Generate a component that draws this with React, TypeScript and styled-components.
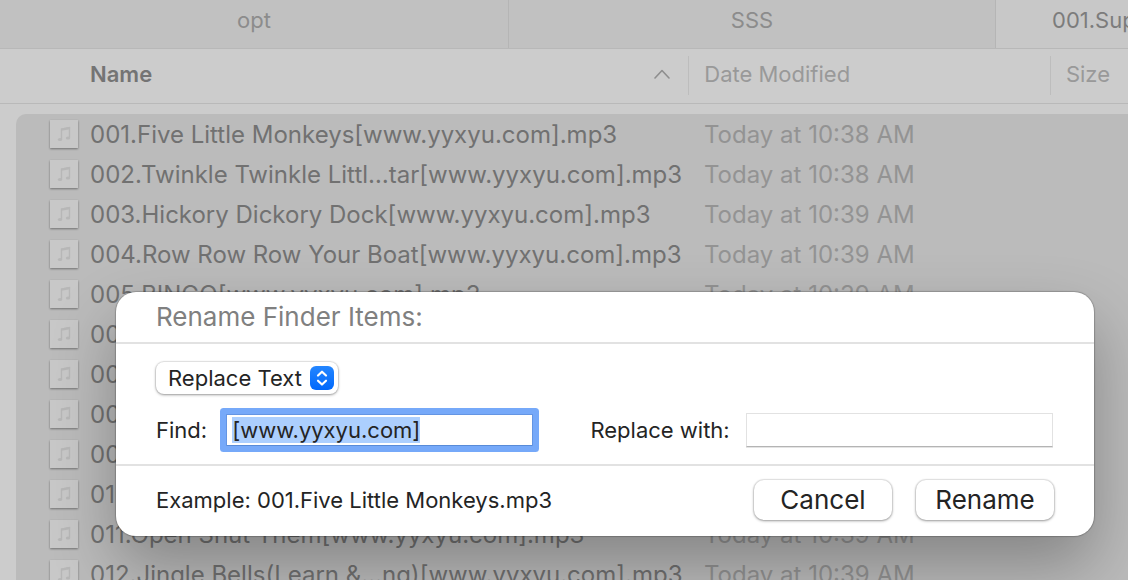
import React, { useEffect, useRef } from 'react';
import styled, { createGlobalStyle } from 'styled-components';

const GlobalStyle = createGlobalStyle`
  * { box-sizing: border-box; }
  body {
    margin: 0;
    overflow: hidden;
    background: #cccccc;
    font-family: Inter, "Liberation Sans", sans-serif;
    font-size: 22px;
  }
`;

const Finder = styled.main`
  position: relative;
  height: 100vh;
  overflow: hidden;
`;

const TabBar = styled.nav`
  display: grid;
  grid-template-columns: 509fr 487fr 132fr;
  height: 49px;
  background: #c1c1c1;
  border-bottom: 1px solid #b8b8b8;
`;

const Tab = styled.button<{ $active?: boolean }>`
  min-width: 0;
  padding: 0 0 8px ${(p) => (p.$active ? 56 : 0)}px;
  border: 0;
  border-right: ${(p) => (p.$active ? 0 : 1)}px solid #b5b5b5;
  background: ${(p) => (p.$active ? '#c8c8c8' : 'transparent')};
  color: ${(p) => (p.$active ? '#7c7c7c' : '#8c8c8c')};
  font: inherit;
  text-align: ${(p) => (p.$active ? 'left' : 'center')};
  white-space: nowrap;
  overflow: hidden;
`;

const FileTable = styled.table`
  display: block;
  white-space: nowrap;
`;

const TableHead = styled.thead`
  display: block;
  border-bottom: 1px solid #b9b9b9;
`;

const HeadRow = styled.tr`
  display: grid;
  grid-template-columns: 689fr 362fr 77fr;
  padding: 7px 0 8px;
`;

const HeadCell = styled.th<{ $primary?: boolean }>`
  display: flex;
  align-items: center;
  justify-content: space-between;
  height: 39px;
  padding: 0 18px 4px ${(p) => (p.$primary ? 90 : 15)}px;
  border-left: ${(p) => (p.$primary ? 0 : 1)}px solid #bdbdbd;
  color: ${(p) => (p.$primary ? '#747474' : '#999999')};
  font-weight: ${(p) => (p.$primary ? 600 : 400)};
`;

const TableBody = styled.tbody`
  display: block;
  margin: 10px 0 0 16px;
  border-radius: 10px 0 0 0;
  background: #bbbbbb;
`;

const FileRow = styled.tr`
  display: grid;
  grid-template-columns: 673fr 362fr 77fr;
  height: 40px;
`;

const Cell = styled.td`
  display: flex;
  align-items: center;
  font-size: 24px;
`;

const NameCell = styled(Cell)`
  gap: 12px;
  padding: 0 0 0 34px;
  color: #717171;
`;

const DateCell = styled(Cell)`
  padding: 0 0 0 15px;
  color: #939393;
`;

const Thumb = styled.span`
  display: flex;
  align-items: center;
  justify-content: center;
  width: 28px;
  height: 28px;
  background: #c8c8c8;
  box-shadow: 0 1px 2px rgba(0, 0, 0, 0.4);
`;

const Dialog = styled.form`
  position: absolute;
  top: 292px;
  left: 116px;
  right: 34px;
  border-radius: 20px;
  background: #ffffff;
  color: #242424;
  box-shadow: 0 0 1px 1px rgba(0, 0, 0, 0.2), 0 30px 64px rgba(0, 0, 0, 0.29);
`;

const DialogTitle = styled.h1`
  margin: 0;
  padding: 10px 40px;
  border-bottom: 2px solid #e2e2e2;
  color: #808080;
  font-size: 26px;
  line-height: 30px;
  font-weight: 400;
`;

const DialogBody = styled.div`
  padding: 18px 40px 11px;
  border-bottom: 2px solid #e2e2e2;
`;

const SelectWrap = styled.div`
  position: relative;
  width: 182px;
  height: 32px;
`;

const ModeSelect = styled.select`
  display: block;
  width: 100%;
  height: 100%;
  padding: 0 36px 0 12px;
  border: 0;
  border-radius: 8px;
  appearance: none;
  background: #ffffff;
  color: inherit;
  font: inherit;
  box-shadow: 0 0 1px 1px rgba(0, 0, 0, 0.09), 0 1px 3px rgba(0, 0, 0, 0.35);
`;

const Stepper = styled.svg`
  position: absolute;
  top: 4px;
  right: 4px;
  pointer-events: none;
`;

const FieldRow = styled.div`
  display: flex;
  align-items: center;
  height: 46px;
  margin-top: 13px;
`;

const FieldLabel = styled.label`
  flex: none;
`;

const TextInput = styled.input`
  flex: 1 1 0;
  min-width: 0;
  height: 34px;
  padding: 0 5px;
  border: 1px solid #e2e2e2;
  border-bottom-color: #b4b4b4;
  border-radius: 0;
  background: #ffffff;
  color: inherit;
  font: inherit;
  outline: none;
  box-shadow: 0 1px 0 #e4e4e4;

  &::selection {
    background: #accffe;
    color: #242424;
  }
`;

const FindInput = styled(TextInput)`
  margin: 0 57px 0 19px;
  height: 32px;
  border-color: #6495e3;
  border-bottom-color: #588bd8;
  box-shadow: 0 0 0 6px #76a9f9;
  border-radius: 1px;
`;

const ReplaceInput = styled(TextInput)`
  margin: 0 1px 0 16px;
`;

const DialogFooter = styled.footer`
  display: flex;
  align-items: center;
  gap: 24px;
  padding: 14px 40px 16px;
`;

const Example = styled.p`
  flex: 1;
  margin: 0;
`;

const PushButton = styled.button`
  width: 138px;
  height: 40px;
  padding: 0 0 2px;
  border: 0;
  border-radius: 10px;
  background: #ffffff;
  color: inherit;
  font: inherit;
  font-size: 26px;
  box-shadow: 0 0 1px 1px rgba(0, 0, 0, 0.09), 0 1px 3px rgba(0, 0, 0, 0.35);
`;

const SortArrow = () => (
  <svg width="16" height="10" viewBox="0 0 16 10" fill="none" stroke="#8e8e8e" strokeWidth="1.6" aria-hidden="true">
    <path d="M1 9 8 1.500 15 9" strokeLinecap="round" strokeLinejoin="round" />
  </svg>
);

const Note = () => (
  <svg width="14" height="16" viewBox="0 0 14 16" aria-hidden="true">
    <path d="M4.500 13V3L12.500 1.500V11.500" fill="none" stroke="#b7b7b7" strokeWidth="1.400" />
    <path d="M4.500 3.700 12.500 2.200" stroke="#b7b7b7" strokeWidth="2.200" />
    <ellipse cx="3" cy="13.500" rx="2.200" ry="1.600" fill="#b7b7b7" />
    <ellipse cx="11" cy="12" rx="2.200" ry="1.600" fill="#b7b7b7" />
  </svg>
);

const files = [
  { name: '001.Five Little Monkeys[www.yyxyu.com].mp3', time: '10:38' },
  { name: '002.Twinkle Twinkle Littl…tar[www.yyxyu.com].mp3', time: '10:38' },
  { name: '003.Hickory Dickory Dock[www.yyxyu.com].mp3', time: '10:39' },
  { name: '004.Row Row Row Your Boat[www.yyxyu.com].mp3', time: '10:39' },
  { name: '005.BINGO[www.yyxyu.com].mp3', time: '10:39' },
  { name: '006.mp3', time: '10:39' },
  { name: '007.mp3', time: '10:39' },
  { name: '008.mp3', time: '10:39' },
  { name: '009.mp3', time: '10:39' },
  { name: '010.mp3', time: '10:39' },
  { name: '011.Open Shut Them[www.yyxyu.com].mp3', time: '10:39' },
  { name: '012.Jingle Bells(Learn &…ng)[www.yyxyu.com].mp3', time: '10:39' },
];

export default function App() {
  const findRef = useRef<HTMLInputElement>(null);

  useEffect(() => {
    findRef.current?.focus();
    findRef.current?.select();
  }, []);

  return (
    <>
      <GlobalStyle />
      <Finder>
        <TabBar>
          <Tab>opt</Tab>
          <Tab>SSS</Tab>
          <Tab $active>001.Super</Tab>
        </TabBar>
        <FileTable>
          <TableHead>
            <HeadRow>
              <HeadCell $primary>Name<SortArrow /></HeadCell>
              <HeadCell>Date Modified</HeadCell>
              <HeadCell>Size</HeadCell>
            </HeadRow>
          </TableHead>
          <TableBody>
            {files.map((f) => (
              <FileRow key={f.name}>
                <NameCell><Thumb><Note /></Thumb>{f.name}</NameCell>
                <DateCell>Today at {f.time} AM</DateCell>
              </FileRow>
            ))}
          </TableBody>
        </FileTable>
        <Dialog onSubmit={(e: React.FormEvent) => e.preventDefault()}>
          <DialogTitle>Rename Finder Items:</DialogTitle>
          <DialogBody>
            <SelectWrap>
              <ModeSelect aria-label="Rename mode" defaultValue="replace">
                <option value="replace">Replace Text</option>
              </ModeSelect>
              <Stepper width="24" height="24" viewBox="0 0 24 24" aria-hidden="true">
                <defs>
                  <linearGradient id="stepper" x1="0" y1="0" x2="0" y2="1">
                    <stop offset="0" stopColor="#2486ff" />
                    <stop offset="1" stopColor="#0068fb" />
                  </linearGradient>
                </defs>
                <rect width="24" height="24" rx="6" fill="url(#stepper)" />
                <path d="M8 9.500 12 5.700 16 9.500M8 14.700 12 18.500 16 14.700" fill="none" stroke="#fff" strokeWidth="2.200" strokeLinecap="round" strokeLinejoin="round" />
              </Stepper>
            </SelectWrap>
            <FieldRow>
              <FieldLabel htmlFor="find">Find:</FieldLabel>
              <FindInput id="find" ref={findRef} defaultValue="[www.yyxyu.com]" />
              <FieldLabel htmlFor="replace">Replace with:</FieldLabel>
              <ReplaceInput id="replace" />
            </FieldRow>
          </DialogBody>
          <DialogFooter>
            <Example>Example: 001.Five Little Monkeys.mp3</Example>
            <PushButton type="button">Cancel</PushButton>
            <PushButton type="submit">Rename</PushButton>
          </DialogFooter>
        </Dialog>
      </Finder>
    </>
  );
}
